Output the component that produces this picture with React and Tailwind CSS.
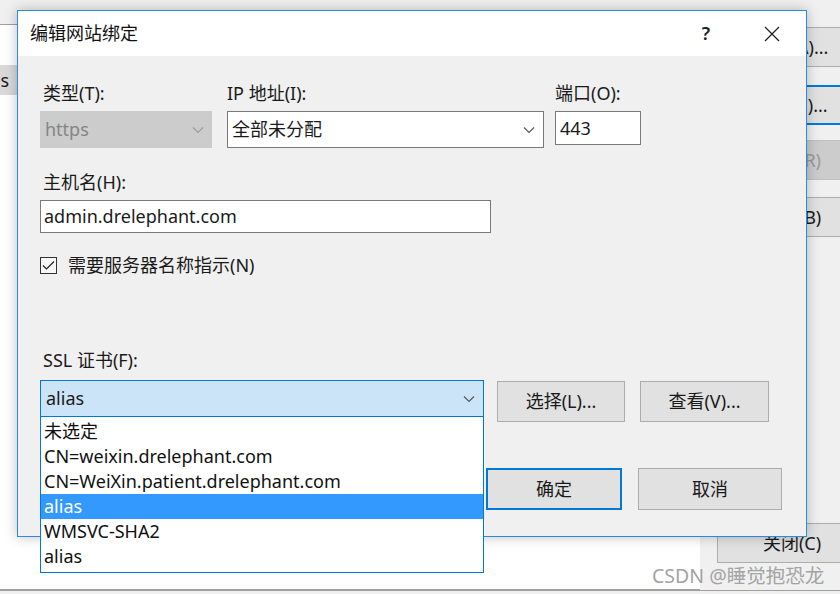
import React from 'react';

const Chevron = ({ color = '#555' }) => (
    <svg width="12" height="8" viewBox="0 0 12 8" fill="none">
        <polyline points="1,1.5 6,6.5 11,1.5" stroke={color} strokeWidth="1.1" />
    </svg>
);

const BgButton = ({ children, disabled, focused }) => (
    <div
        className={`h-[40px] w-[150px] flex items-center justify-center text-[18px] border ${
            disabled
                ? 'bg-[#cccccc] border-[#bfbfbf] text-[#9a9a9a]'
                : focused
                ? 'bg-[#e1e1e1] border-[#0078d7] border-y-[2px] text-[#1a1a1a]'
                : 'bg-[#e1e1e1] border-[#adadad] text-[#1a1a1a]'
        }`}
    >
        {children}
    </div>
);

const DlgButton = ({ children, className = '' }) => (
    <div className={`h-[41px] flex items-center justify-center bg-[#e1e1e1] border border-[#adadad] text-[18px] text-[#1a1a1a] ${className}`}>
        {children}
    </div>
);

const certs = ['未选定', 'CN=weixin.drelephant.com', 'CN=WeiXin.patient.drelephant.com', 'alias', 'WMSVC-SHA2', 'alias'];

export default function App() {
    return (
        <div className="relative w-[840px] h-[594px] overflow-hidden bg-[#f0f0f0] text-[#1a1a1a] font-['Noto_Sans','Noto_Sans_CJK_SC',sans-serif]">
            {/* window behind */}
            <div className="flex flex-col h-full">
                <div className="flex h-[590px]">
                    <div className="w-[700px] shrink-0 flex flex-col">
                        <div className="h-[25px] bg-[#f0f0f0] border-b border-[#a0a0a0]" />
                        <div className="flex-1 flex flex-col bg-white border-b border-[#a0a0a0]">
                            <div className="h-[40px]" />
                            <div className="h-[30px] w-[17px] bg-[#d9d9d9] flex items-center justify-end overflow-hidden text-[18px]">
                                <span className="mr-[8px]">s</span>
                            </div>
                        </div>
                    </div>
                    <div className="ml-[17px] shrink-0 flex flex-col pt-[27px]">
                        <BgButton>添加(A)...</BgButton>
                        <div className="mt-[18px]">
                            <BgButton focused>编辑(E)...</BgButton>
                        </div>
                        <div className="mt-[15px]">
                            <BgButton disabled>删除(R)</BgButton>
                        </div>
                        <div className="mt-[17px]">
                            <BgButton>浏览(B)</BgButton>
                        </div>
                        <div className="mt-auto mb-[27px]">
                            <BgButton>关闭(C)</BgButton>
                        </div>
                    </div>
                </div>
                <div className="h-[1px] bg-[#a0a0a0]" />
            </div>

            {/* watermark */}
            <div className="absolute left-[652px] top-[563px] text-[19.5px] text-[#a3a3a3] leading-[26px]">CSDN @睡觉抱恐龙</div>

            {/* dialog */}
            <div className="absolute left-[17px] top-[10px] w-[790px] h-[527px] border border-[#2a8ae0] bg-[#f0f0f0] flex flex-col shadow-[0_0_12px_rgba(0,0,0,0.25)]">
                <div className="h-[45px] bg-white flex items-center pl-[12px] pr-[26px] shrink-0">
                    <span className="text-[18px] text-[#111]">编辑网站绑定</span>
                    <span className="ml-auto text-[18px] font-semibold text-[#222]">?</span>
                    <svg className="ml-[54px]" width="16" height="16" viewBox="0 0 16 16">
                        <path d="M1 1 L15 15 M15 1 L1 15" stroke="#222" strokeWidth="1.3" />
                    </svg>
                </div>

                <div className="relative flex-1 pl-[22px] text-[18px]">
                    {/* row 1 */}
                    <div className="flex mt-[27px]">
                        <div className="flex flex-col w-[172px]">
                            <div className="h-[20px] leading-[20px] pl-[3px]">类型(T):</div>
                            <div className="mt-[8px] h-[37px] bg-[#cccccc] flex items-center pl-[5px] pr-[8px] text-[#858585]">
                                https
                                <span className="ml-auto"><Chevron color="#9a9a9a" /></span>
                            </div>
                        </div>
                        <div className="flex flex-col w-[317px] ml-[15px]">
                            <div className="h-[20px] leading-[20px]">IP 地址(I):</div>
                            <div className="mt-[8px] h-[37px] bg-white border border-[#7a7a7a] flex items-center pl-[4px] pr-[8px]">
                                全部未分配
                                <span className="ml-auto"><Chevron /></span>
                            </div>
                        </div>
                        <div className="flex flex-col w-[86px] ml-[11px]">
                            <div className="h-[20px] leading-[20px]">端口(O):</div>
                            <div className="mt-[8px] h-[34px] bg-white border border-[#7a7a7a] flex items-center pl-[4px]">443</div>
                        </div>
                    </div>

                    {/* row 2 */}
                    <div className="mt-[24px] h-[20px] leading-[20px] pl-[3px]">主机名(H):</div>
                    <div className="mt-[8px] w-[451px] h-[33px] bg-white border border-[#7a7a7a] flex items-center pl-[3px]">admin.drelephant.com</div>

                    {/* checkbox */}
                    <div className="mt-[22px] h-[20px] flex items-center">
                        <div className="w-[17px] h-[17px] border border-[#333] bg-[#f7f7f7] flex items-center justify-center">
                            <svg width="13" height="11" viewBox="0 0 13 11" fill="none">
                                <polyline points="1,5.5 4.5,9 12,1.5" stroke="#222" strokeWidth="1.2" />
                            </svg>
                        </div>
                        <span className="ml-[11px] leading-[20px]">需要服务器名称指示(N)</span>
                    </div>

                    {/* ssl */}
                    <div className="mt-[75px] h-[20px] leading-[20px] pl-[3px]">SSL 证书(F):</div>
                    <div className="mt-[10px] flex items-start">
                        <div className="w-[444px] h-[37px] bg-[#cce4f7] border border-[#0078d7] flex items-center pl-[5px] pr-[8px]">
                            alias
                            <span className="ml-auto"><Chevron /></span>
                        </div>
                        <DlgButton className="mt-[1px] ml-[13px] w-[128px]">选择(L)...</DlgButton>
                        <DlgButton className="mt-[1px] ml-[15px] w-[129px]">查看(V)...</DlgButton>
                    </div>

                    {/* ok / cancel */}
                    <div className="mt-[46px] flex pl-[446px]">
                        <div className="w-[136px] h-[42px] flex items-center justify-center bg-[#e1e1e1] border-[2px] border-[#0078d7]">确定</div>
                        <DlgButton className="ml-[16px] w-[144px] !h-[42px]">取消</DlgButton>
                    </div>

                    {/* open dropdown list */}
                    <div className="absolute left-[22px] top-[361px] w-[444px] h-[156px] bg-white border border-[#0078d7] border-t-0 pt-[2px] flex flex-col">
                        {certs.map((c, i) => (
                            <div
                                key={i}
                                className={`h-[25px] leading-[25px] pl-[3px] ${
                                    i === 3 ? 'bg-[#3399ff] text-white' : 'text-[#111]'
                                }`}
                            >
                                {c}
                            </div>
                        ))}
                    </div>
                </div>
            </div>
        </div>
    );
}
